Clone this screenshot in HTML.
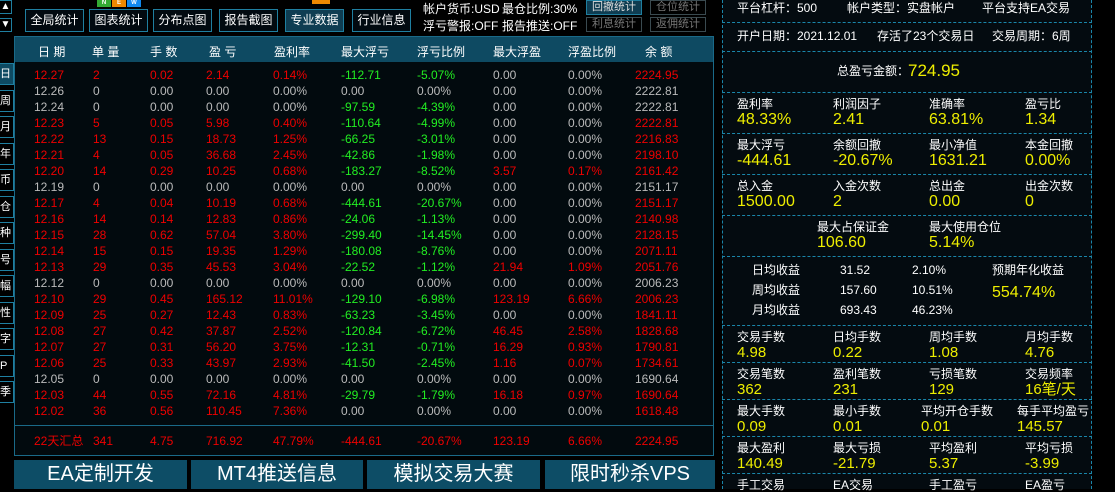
<!DOCTYPE html>
<html><head><meta charset="utf-8"><style>
*{margin:0;padding:0;box-sizing:border-box}
body{width:1115px;height:489px;background:#000;position:relative;overflow:hidden;font-family:"Liberation Sans","Noto Sans CJK SC",sans-serif;color:#ddd}
.a{position:absolute;white-space:nowrap}
.btn{position:absolute;top:9px;height:23px;border:1px solid #1f7fa0;color:#fff;font-size:12px;line-height:21px;text-align:center;background:#020a10}
.gb{position:absolute;height:15px;border:1px solid #3a4a50;color:#777;font-size:11px;line-height:13px;text-align:center}
.tab{position:absolute;left:0;width:14px;height:22px;border:1px solid #1f7fa0;border-left:none;font-size:11px;color:#fff;line-height:20px;background:#000}
.hd{position:absolute;top:43px;font-size:12px;color:#fff}
.r{position:absolute;font-size:12px;height:16px;line-height:16px}
.R{color:#e00}.G{color:#2e2}.W{color:#bbb}
.rp{position:absolute;left:722px;top:0;width:370px;height:489px;border-left:1.5px dashed #1a86aa;border-right:1.5px dashed #1a86aa;background:#040b10}
.hl{position:absolute;left:722px;width:370px;border-top:1.5px dashed #1a86aa}
.l{position:absolute;font-size:12px;color:#fff;line-height:1;white-space:nowrap}
.v{position:absolute;font-size:16px;color:#ee0;line-height:1;white-space:nowrap}
.bb{position:absolute;top:460px;height:29px;background:#0d4d66;color:#fff;font-size:20px;text-align:center;line-height:28px}
.t{position:absolute;font-size:12px;color:#fff;white-space:nowrap}
</style></head><body>
<div class="a" style="left:0;top:0;width:12px;height:14px;border:1px solid #1f7fa0;border-left:none;color:#fff;font-size:10px;text-align:center">▲</div>
<div class="a" style="left:0;top:18px;width:12px;height:14px;border:1px solid #1f7fa0;border-left:none;color:#fff;font-size:10px;text-align:center">▼</div>
<div class="a" style="left:97px;top:0;width:44px;height:7px;display:flex;font-size:6px;color:#fff;font-weight:bold;line-height:7px;gap:1px"><span style="background:#3a3;flex:1;text-align:center">N</span><span style="background:#e80;flex:1;text-align:center">E</span><span style="background:#18e;flex:1;text-align:center">W</span></div>
<div class="a" style="left:312px;top:0;width:18px;height:4px;background:#e80"></div>
<div class="btn" style="left:25px;width:59px">全局统计</div>
<div class="btn" style="left:89px;width:59px">图表统计</div>
<div class="btn" style="left:153px;width:59px">分布点图</div>
<div class="btn" style="left:219px;width:59px">报告截图</div>
<div class="btn" style="left:285px;width:59px;background:#0f3d52">专业数据</div>
<div class="btn" style="left:352px;width:59px">行业信息</div>
<div class="t" style="left:423px;top:0">帐户货币:USD</div>
<div class="t" style="left:502px;top:0">最仓比例:30%</div>
<div class="t" style="left:423px;top:17px">浮亏警报:OFF</div>
<div class="t" style="left:502px;top:17px">报告推送:OFF</div>
<div class="gb" style="left:586px;top:0;width:56px;border-color:#1f7fa0;background:#0f3d52;color:#ddd">回撤统计</div>
<div class="gb" style="left:650px;top:0;width:56px">仓位统计</div>
<div class="gb" style="left:586px;top:17px;width:56px">利息统计</div>
<div class="gb" style="left:650px;top:17px;width:56px">返佣统计</div>
<div class="a" style="left:14px;top:36px;width:700px;height:420px;border:1px solid #1a6a88;background:#020a0e"></div>
<div class="a" style="left:15px;top:37px;width:698px;height:25px;background:#0e4a62"></div>
<div class="a" style="left:15px;top:425px;width:698px;border-top:1px solid #1a6a88"></div>
<div class="hd" style="left:38px">日 期</div><div class="hd" style="left:92px">单 量</div><div class="hd" style="left:150px">手 数</div><div class="hd" style="left:209px">盈 亏</div><div class="hd" style="left:274px">盈利率</div><div class="hd" style="left:341px">最大浮亏</div><div class="hd" style="left:417px">浮亏比例</div><div class="hd" style="left:493px">最大浮盈</div><div class="hd" style="left:568px">浮盈比例</div><div class="hd" style="left:645px">余 额</div>
<div id="tabs"></div>
<div id="rows"></div>
<div class="bb" style="left:14px;width:173px">EA定制开发</div>
<div class="bb" style="left:191px;width:172px">MT4推送信息</div>
<div class="bb" style="left:367px;width:173px">模拟交易大赛</div>
<div class="bb" style="left:545px;width:170px">限时秒杀VPS</div>
<div class="rp"></div>
<div class="hl" style="top:22px"></div><div class="hl" style="top:51px"></div><div class="hl" style="top:92px"></div><div class="hl" style="top:133px"></div><div class="hl" style="top:174px"></div><div class="hl" style="top:215px"></div><div class="hl" style="top:256px"></div><div class="hl" style="top:325px"></div><div class="hl" style="top:362px"></div><div class="hl" style="top:399px"></div><div class="hl" style="top:436px"></div><div class="hl" style="top:473px"></div>
<div class="l" style="left:737px;top:2px">平台杠杆：500</div><div class="l" style="left:847px;top:2px">帐户类型：实盘帐户</div><div class="l" style="left:982px;top:2px">平台支持EA交易</div>
<div class="l" style="left:737px;top:30px">开户日期：2021.12.01</div><div class="l" style="left:877px;top:30px">存活了23个交易日</div><div class="l" style="left:992px;top:30px">交易周期：6周</div>
<div class="l" style="left:837px;top:65px">总盈亏金额：</div><div class="v" style="left:908px;top:62px;font-size:17px">724.95</div>
<div id="grid"></div>
<div class="l" style="left:752px;top:264px">日均收益</div><div class="l" style="left:840px;top:264px">31.52</div><div class="l" style="left:912px;top:264px">2.10%</div>
<div class="l" style="left:752px;top:284px">周均收益</div><div class="l" style="left:840px;top:284px">157.60</div><div class="l" style="left:912px;top:284px">10.51%</div>
<div class="l" style="left:752px;top:304px">月均收益</div><div class="l" style="left:840px;top:304px">693.43</div><div class="l" style="left:912px;top:304px">46.23%</div>
<div class="l" style="left:992px;top:264px">预期年化收益</div><div class="v" style="left:992px;top:285px">554.74%</div>
<script>
var t="日周月年币仓种号幅性字P季";var h="";
for(var i=0;i<13;i++){h+='<div class="tab" style="top:'+(63+i*26.5)+'px;'+(i==0?'background:#0e4a62;':'')+'">'+t[i]+'</div>'}
document.getElementById('tabs').innerHTML=h;
var D=[["12.27",2,"0.02","2.14","0.14%","-112.71","-5.07%","0.00","0.00%","2224.95"],["12.26",0,"0.00","0.00","0.00%","0.00","0.00%","0.00","0.00%","2222.81"],["12.24",0,"0.00","0.00","0.00%","-97.59","-4.39%","0.00","0.00%","2222.81"],["12.23",5,"0.05","5.98","0.40%","-110.64","-4.99%","0.00","0.00%","2222.81"],["12.22",13,"0.15","18.73","1.25%","-66.25","-3.01%","0.00","0.00%","2216.83"],["12.21",4,"0.05","36.68","2.45%","-42.86","-1.98%","0.00","0.00%","2198.10"],["12.20",14,"0.29","10.25","0.68%","-183.27","-8.52%","3.57","0.17%","2161.42"],["12.19",0,"0.00","0.00","0.00%","0.00","0.00%","0.00","0.00%","2151.17"],["12.17",4,"0.04","10.19","0.68%","-444.61","-20.67%","0.00","0.00%","2151.17"],["12.16",14,"0.14","12.83","0.86%","-24.06","-1.13%","0.00","0.00%","2140.98"],["12.15",28,"0.62","57.04","3.80%","-299.40","-14.45%","0.00","0.00%","2128.15"],["12.14",15,"0.15","19.35","1.29%","-180.08","-8.76%","0.00","0.00%","2071.11"],["12.13",29,"0.35","45.53","3.04%","-22.52","-1.12%","21.94","1.09%","2051.76"],["12.12",0,"0.00","0.00","0.00%","0.00","0.00%","0.00","0.00%","2006.23"],["12.10",29,"0.45","165.12","11.01%","-129.10","-6.98%","123.19","6.66%","2006.23"],["12.09",25,"0.27","12.43","0.83%","-63.23","-3.45%","0.00","0.00%","1841.11"],["12.08",27,"0.42","37.87","2.52%","-120.84","-6.72%","46.45","2.58%","1828.68"],["12.07",27,"0.31","56.20","3.75%","-12.31","-0.71%","16.29","0.93%","1790.81"],["12.06",25,"0.33","43.97","2.93%","-41.50","-2.45%","1.16","0.07%","1734.61"],["12.05",0,"0.00","0.00","0.00%","0.00","0.00%","0.00","0.00%","1690.64"],["12.03",44,"0.55","72.16","4.81%","-29.79","-1.79%","16.18","0.97%","1690.64"],["12.02",36,"0.56","110.45","7.36%","0.00","0.00%","0.00","0.00%","1618.48"]];
var X=[34,93,150,206,273,341,417,493,568,635];h="";
function cell(v,z){return v=="0.00"||v=="0.00%"?"W":(z?"R":"G")}
D.forEach(function(r,i){var y=67+i*16,z=r[1]>0;for(var j=0;j<10;j++){var c;if(j<5||j==9)c=z?"R":"W";else if(j<7)c=cell(r[j],0);else c=cell(r[j],1);h+='<div class="r '+c+'" style="left:'+X[j]+'px;top:'+y+'px">'+r[j]+'</div>'}});
var S=["22天汇总",341,"4.75","716.92","47.79%","-444.61","-20.67%","123.19","6.66%","2224.95"];
for(var j=0;j<10;j++)h+='<div class="r R" style="left:'+(j==0?34:X[j])+'px;top:433px">'+S[j]+'</div>';
document.getElementById('rows').innerHTML=h;
var G=[[92,[["盈利率","48.33%"],["利润因子","2.41"],["准确率","63.81%"],["盈亏比","1.34"]]],[133,[["最大浮亏","-444.61"],["余额回撤","-20.67%"],["最小净值","1631.21"],["本金回撤","0.00%"]]],[174,[["总入金","1500.00"],["入金次数","2"],["总出金","0.00"],["出金次数","0"]]],[325,[["交易手数","4.98"],["日均手数","0.22"],["周均手数","1.08"],["月均手数","4.76"]]],[362,[["交易笔数","362"],["盈利笔数","231"],["亏损笔数","129"],["交易频率","16笔/天"]]],[399,[["最大手数","0.09"],["最小手数","0.01"],["平均开仓手数","0.01"],["每手平均盈亏","145.57"]]],[436,[["最大盈利","140.49"],["最大亏损","-21.79"],["平均盈利","5.37"],["平均亏损","-3.99"]]],[473,[["手工交易",""],["EA交易",""],["手工盈亏",""],["EA盈亏",""]]]];
var GX=[737,833,929,1025];h="";
G.forEach(function(g){var y=g[0];g[1].forEach(function(c,k){var x=GX[k];if(y==399&&k==2)x=921;if(y==399&&k==3)x=1017;h+='<div class="l" style="left:'+x+'px;top:'+(y+6)+'px">'+c[0]+'</div>';var vs=(y>=325)?'font-size:15px;':'';h+='<div class="v" style="left:'+x+'px;top:'+(y+20)+'px;'+vs+'">'+c[1]+'</div>'})});
h+='<div class="l" style="left:817px;top:221px">最大占保证金</div><div class="v" style="left:817px;top:235px">106.60</div><div class="l" style="left:929px;top:221px">最大使用仓位</div><div class="v" style="left:929px;top:235px">5.14%</div>';
document.getElementById('grid').innerHTML=h;
</script>
</body></html>
